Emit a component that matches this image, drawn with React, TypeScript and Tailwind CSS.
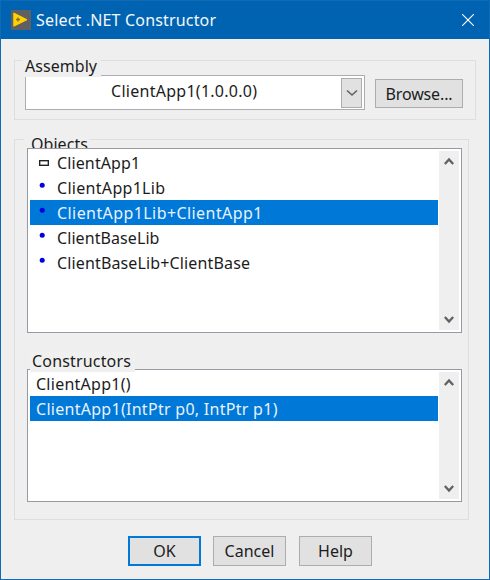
import type { ReactNode } from "react";

function Label({ children, className }: { children: ReactNode; className: string }) {
  return <span className={`block whitespace-nowrap text-[16px] ${className}`}>{children}</span>;
}

function Chevron({ up = false }: { up?: boolean }) {
  return (
    <svg width="10" height="9" viewBox="0 0 10 9" className={up ? "" : "rotate-180"}>
      <path d="M0.8 7 L5 2.4 L9.2 7" fill="none" stroke="#606060" strokeWidth="2.3" />
    </svg>
  );
}

function ScrollBar() {
  return (
    <div className="my-0.5 mr-0.5 flex w-5 shrink-0 flex-col items-center justify-between bg-[#efefef] pt-[6px] pb-[6px]">
      <Chevron up />
      <Chevron />
    </div>
  );
}

type Item = { name: string; icon?: "box" | "dot"; selected?: boolean; tracking: string };

const objects: Item[] = [
  { name: "ClientApp1", icon: "box", tracking: "tracking-[0.12px]" },
  { name: "ClientApp1Lib", icon: "dot", tracking: "tracking-[0.3px]" },
  { name: "ClientApp1Lib+ClientApp1", icon: "dot", selected: true, tracking: "tracking-[0.42px]" },
  { name: "ClientBaseLib", icon: "dot", tracking: "tracking-[0.08px]" },
  { name: "ClientBaseLib+ClientBase", icon: "dot", tracking: "tracking-[0.14px]" },
];

const constructors: Item[] = [
  { name: "ClientApp1()", tracking: "tracking-[0.26px]" },
  { name: "ClientApp1(IntPtr p0, IntPtr p1)", selected: true, tracking: "tracking-[0.28px]" },
];

function ListBox({ items, className }: { items: Item[]; className: string }) {
  return (
    <div className={`flex w-[435px] border border-[#9899a2] bg-white ${className}`}>
      <div className="flex w-[411px] shrink-0 flex-col pt-[1px] pl-0.5">
        {items.map((item) => (
          <div
            key={item.name}
            className={`flex h-[25px] w-[408px] ${item.selected ? "bg-[#0078d7] text-[#e8f2fc]" : ""}`}
          >
            {item.icon && (
              <span className="flex h-full w-[27px] shrink-0 justify-start">
                {item.icon === "box" ? (
                  <span className="mt-[10px] ml-[9px] h-[6px] w-[10px] border border-[#222] shadow-[inset_0_0_0_0.5px_#555]" />
                ) : (
                  <svg width="6" height="6" viewBox="0 0 6 6" className="mt-[7px] ml-[9px]">
                    <circle cx="3.2" cy="3.2" r="2.5" fill="#0000e0" />
                  </svg>
                )}
              </span>
            )}
            <Label className={`${item.icon ? "" : "ml-[6px]"} leading-[27px] ${item.tracking}`}>{item.name}</Label>
          </div>
        ))}
      </div>
      <ScrollBar />
    </div>
  );
}

export default function App() {
  return (
    <div className="flex h-[580px] w-[490px] flex-col overflow-hidden border border-[#0f6bb5] bg-[#efefef] font-['Noto_Sans',sans-serif] text-[#1c1c1c]">
      <header className="flex h-[38px] shrink-0 items-center bg-[#0063b1] text-[#f4f8fc]">
        <svg width="20" height="20" viewBox="0 0 20 20" className="ml-[10px]">
          <rect width="20" height="20" fill="#606063" />
          <path d="M2.8 3 L16 9.7 L2.8 16.2 Z" fill="#ffd200" stroke="#ffd200" strokeLinejoin="round" />
          <path d="M5 9.5 h4 M7 7.5 v4" stroke="#7d7040" strokeWidth="1.4" />
        </svg>
        <Label className="ml-[5px] tracking-[0.17px]">Select .NET Constructor</Label>
        <svg width="12" height="12" viewBox="0 0 12 12" className="mr-[15px] ml-auto">
          <path d="M0 0 L12 12 M12 0 L0 12" stroke="white" strokeWidth="1.1" />
        </svg>
      </header>

      <section className="mt-[21px] ml-[13px] flex h-[60px] w-[462px] shrink-0 border border-[#dedede]">
        <div className="w-[350px] shrink-0">
          <div className="relative z-10 -mt-px ml-[7px] h-[17px] w-[79px] bg-[#efefef] pl-[3px]">
            <Label className="leading-[12px] tracking-[0.05px]">Assembly</Label>
          </div>
          <div className="-mt-[2px] ml-[10px] flex h-[35px] w-[340px] border border-[#abadb3] bg-white">
            <Label className="ml-[85px] leading-[30px] tracking-[0.27px]">ClientApp1(1.0.0.0)</Label>
            <span className="mt-0.5 mr-[2px] ml-auto flex h-[30px] w-[21px] items-center justify-center border border-[#adadad] bg-[#e1e1e1]">
              <svg width="12" height="8" viewBox="0 0 12 8">
                <path d="M1 1.5 L6 6 L11 1.5" fill="none" stroke="#606060" strokeWidth="1.6" />
              </svg>
            </span>
          </div>
        </div>
        <button className="mt-[18px] ml-[10px] flex h-[29px] w-[88px] items-center justify-center border border-[#adadad] bg-[#e1e1e1]">
          <Label className="tracking-[-0.15px]">Browse...</Label>
        </button>
      </section>

      <section className="mt-[19px] ml-[13px] h-[381px] w-[455px] shrink-0 border border-[#dedede]">
        <div className="-mt-px ml-[9px] h-[9px] w-[66px] bg-[#efefef] pl-[7px]">
          <Label className="leading-[10px] tracking-[0.05px]">Objects</Label>
        </div>
        <ListBox items={objects} className="relative z-10 ml-3 h-[185px]" />
        <div className="relative z-10 mt-[19px] ml-[15px] h-5 w-[105px] bg-[#f0f0f0] pl-0.5">
          <Label className="leading-[18px] tracking-[0.17px]">Constructors</Label>
        </div>
        <ListBox items={constructors} className="-mt-[3px] ml-3 h-[133px]" />
      </section>

      <footer className="mt-4 ml-[127px] flex h-[30px] shrink-0">
        <button className="flex w-[73px] items-center justify-center border-2 border-[#0078d7] bg-[#e1e1e1]">
          <Label className="tracking-[0px]">OK</Label>
        </button>
        <button className="ml-3 flex w-[73px] items-center justify-center border border-[#adadad] bg-[#e1e1e1]">
          <Label className="tracking-[0px]">Cancel</Label>
        </button>
        <button className="ml-[13px] flex w-[73px] items-center justify-center border border-[#adadad] bg-[#e1e1e1]">
          <Label className="tracking-[0px]">Help</Label>
        </button>
      </footer>
    </div>
  );
}
